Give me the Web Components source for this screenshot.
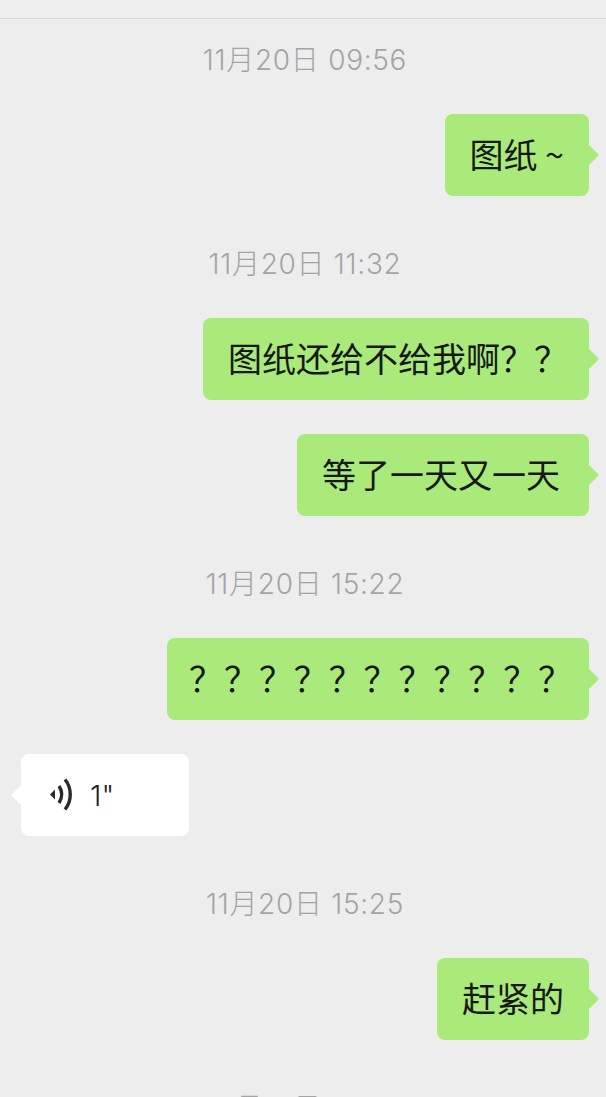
<!DOCTYPE html>
<html>
<head>
<meta charset="utf-8">
<style>
html, body { margin: 0; height: 1097px; overflow: hidden; background: #ededed; }
</style>
</head>
<body>
<chat-view>
  <chat-time>11月20日 09:56</chat-time>
  <chat-bubble>图纸 ~</chat-bubble>
  <chat-time>11月20日 11:32</chat-time>
  <chat-bubble style="padding: 0 21px 0 25px">图纸还给不给我啊？？</chat-bubble>
  <chat-bubble style="padding: 0 29px 0 25px">等了一天又一天</chat-bubble>
  <chat-time>11月20日 15:22</chat-time>
  <chat-bubble style="padding: 0 16px 0 22px; letter-spacing: .9px">？？？？？？？？？？？</chat-bubble>
  <voice-bubble>1"</voice-bubble>
  <chat-time>11月20日 15:25</chat-time>
  <chat-bubble>赶紧的</chat-bubble>
  <chat-time>11月21日 11:02</chat-time>
</chat-view>
<script>
class ChatView extends HTMLElement {
    constructor() {
        super();
        this.attachShadow({ mode: 'open' }).innerHTML = `
        <style>
        :host { display: block; font-family: "Noto Sans CJK SC", "Liberation Sans", sans-serif; }
        #head { height: 18px; background: #efefef; border-bottom: 1px solid #d8d8d8; }
        #list { display: flex; flex-direction: column; gap: 34px; padding-top: 21px; }
        </style>
        <div id="head"></div>
        <div id="list"><slot></slot></div>`;
    }
}

class ChatTime extends HTMLElement {
    constructor() {
        super();
        this.attachShadow({ mode: 'open' }).innerHTML = `
        <style>
        :host { display: block; height: 40px; line-height: 41px; padding-left: 4px; text-align: center; color: #a4a4a4; letter-spacing: .7px;
                font-family: Inter, "Noto Sans CJK SC", sans-serif; font-size: 28px; font-weight: 300; white-space: nowrap; }
        :host(:not(:first-child)) { margin-top: 14px; }
        </style>
        <slot></slot>`;
    }
}

class ChatBubble extends HTMLElement {
    constructor() {
        super();
        this.attachShadow({ mode: 'open' }).innerHTML = `
        <style>
        :host { display: block; align-self: flex-end; margin-right: 17px; position: relative;
                height: 82px; line-height: 80px; padding: 0 25px; box-sizing: border-box;
                background: #a9ea7a; border-radius: 8px; color: #181818; font-size: 34px; font-weight: 400; white-space: nowrap; }
        #tail { position: absolute; left: 100%; top: 31px; width: 10px; height: 20px; background: #a9ea7a;
                clip-path: polygon(0 0, 100% 50%, 0 100%); }
        </style>
        <slot></slot><div id="tail"></div>`;
    }
}

class VoiceBubble extends HTMLElement {
    constructor() {
        super();
        this.attachShadow({ mode: 'open' }).innerHTML = `
        <style>
        :host { display: flex; align-items: center; align-self: flex-start; margin-left: 21px; position: relative;
                width: 168px; height: 82px; box-sizing: border-box; padding-left: 28px; gap: 16px;
                background: #fff; border-radius: 8px; color: #222; font-family: Inter, "Liberation Sans", sans-serif; font-size: 29px; font-weight: 300; }
        #tail { position: absolute; right: 100%; top: 31px; width: 10px; height: 20px; background: #fff;
                clip-path: polygon(100% 0, 0 50%, 100% 100%); }
        svg { width: 25px; height: 34px; }
        </style>
        <div id="tail"></div>
        <svg viewBox="0 0 25 34" fill="none" stroke="#2a2a2a" stroke-width="3.4">
            <path d="M1 16.5 6 11.5V21.5Z" fill="#2a2a2a" stroke="none"/>
            <path d="M10 8C13.5 13.5 13.5 19.5 10 25"/>
            <path d="M16 1.5C23 10 23 23 16 31.5"/>
        </svg>
        <span><slot></slot></span>`;
    }
}

customElements.define('chat-view', ChatView);
customElements.define('chat-time', ChatTime);
customElements.define('chat-bubble', ChatBubble);
customElements.define('voice-bubble', VoiceBubble);
</script>
</body>
</html>
